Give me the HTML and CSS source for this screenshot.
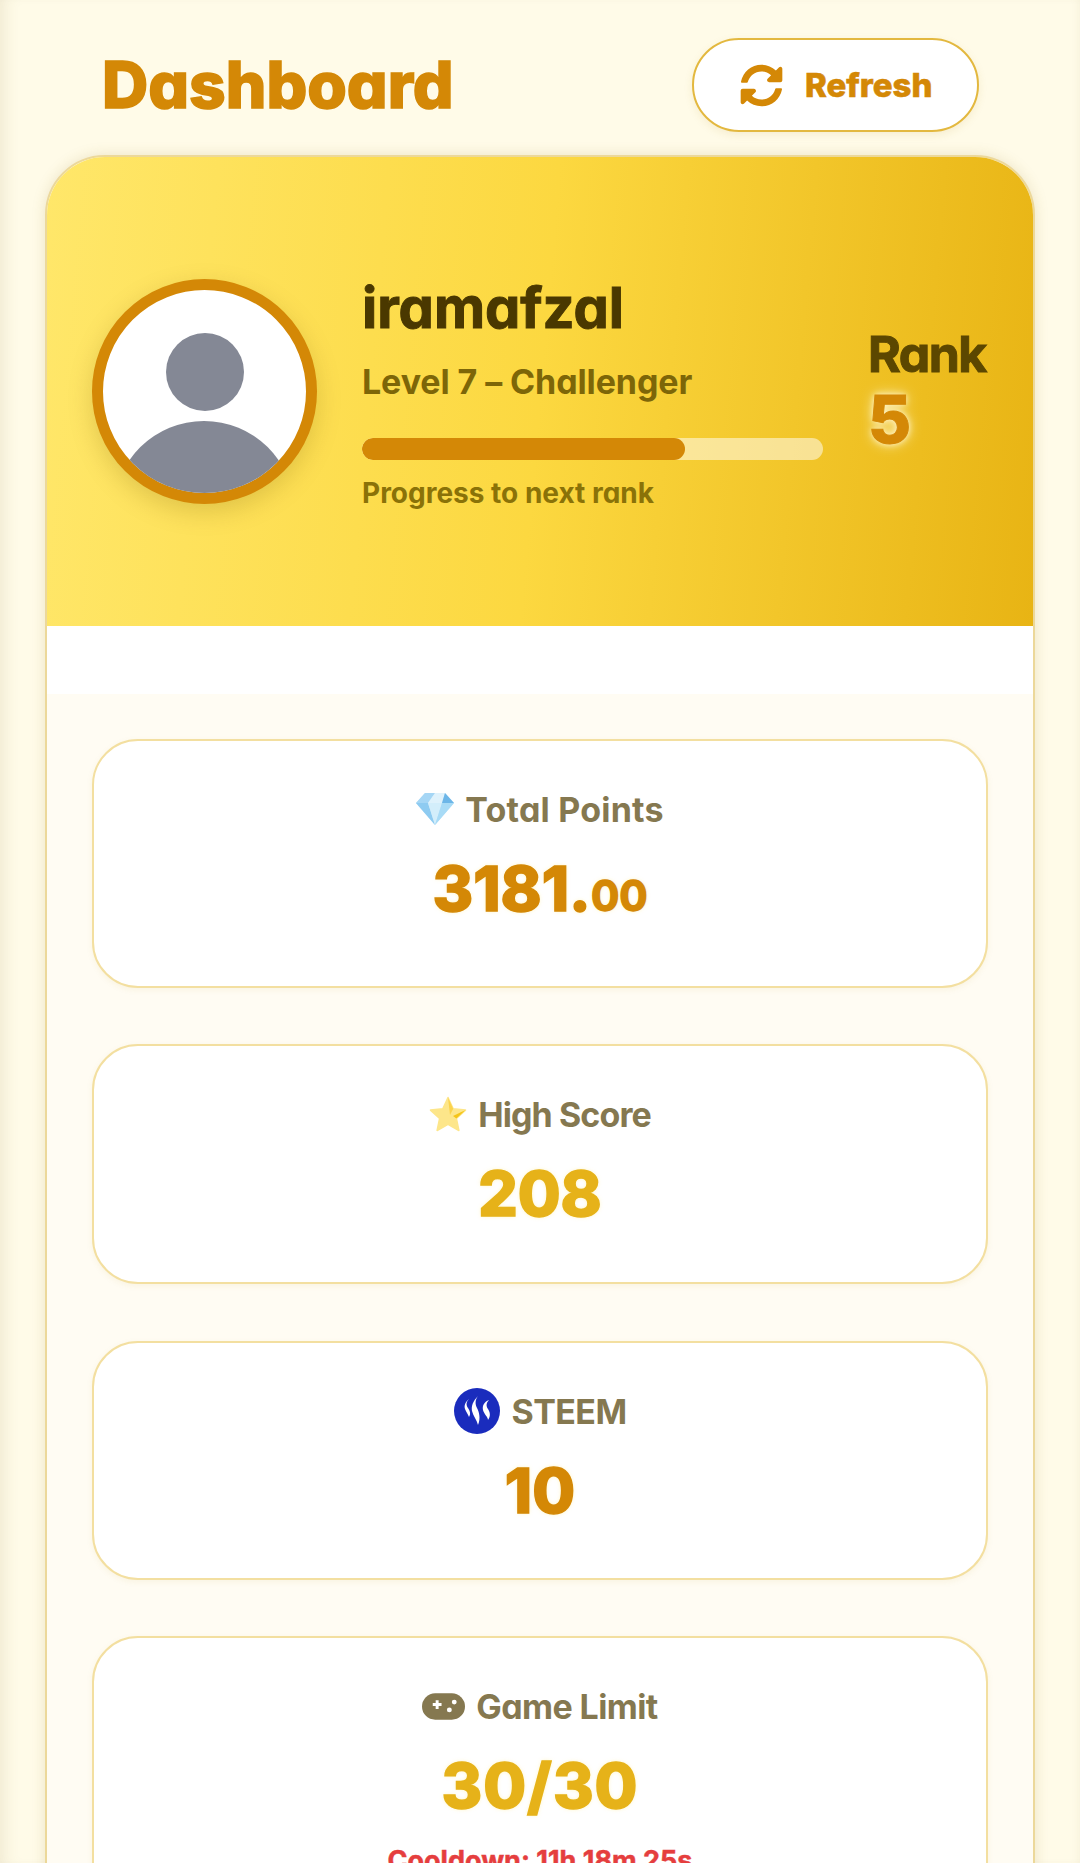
FILE: index.html
```html
<!DOCTYPE html>
<html>
<head>
  <meta charset="UTF-8">
  <title>Dashboard</title>
  <link rel="stylesheet" href="styles.css">
</head>
<body>
<div class="topbar">
  <h1 class="title">Dashboard</h1>
  <button class="refresh" type="button">
    <svg class="refresh-icon" viewBox="0 0 512 512"><path d="M370.72 133.28C339.458 104.008 298.888 87.962 255.848 88c-77.458.068-144.328 53.178-162.791 126.85-1.344 5.363-6.122 9.15-11.651 9.15H24.103c-7.498 0-13.194-6.807-11.807-14.176C33.933 94.924 134.813 8 256 8c66.448 0 126.791 26.136 171.315 68.685L463.03 40.97C478.149 25.851 504 36.559 504 57.941V192c0 13.255-10.745 24-24 24H345.941c-21.382 0-32.09-25.851-16.971-40.971l41.75-41.749zM32 296h134.059c21.382 0 32.09 25.851 16.971 40.971l-41.75 41.75c31.262 29.273 71.835 45.319 114.876 45.28 77.418-.07 144.315-53.144 162.787-126.849 1.344-5.363 6.122-9.15 11.651-9.15h57.304c7.498 0 13.194 6.807 11.807 14.176C478.067 417.076 377.187 504 256 504c-66.448 0-126.791-26.136-171.315-68.685L48.97 471.03C33.851 486.149 8 475.441 8 454.059V320c0-13.255 10.745-24 24-24z"/></svg>
    <span>Refresh</span>
  </button>
</div>

<div class="card">
  <div class="hero">
    <div class="avatar">
      <svg viewBox="0 0 203 203">
        <circle cx="102" cy="82" r="39" fill="#848895"/>
        <ellipse cx="101" cy="220" rx="90" ry="89" fill="#848895"/>
      </svg>
    </div>
    <div class="profile">
      <div class="name">iramafzal</div>
      <div class="level">Level 7 – Challenger</div>
      <div class="track"><div class="fill" style="width: 70%"></div></div>
      <div class="progress-label">Progress to next rank</div>
    </div>
    <div class="rank">
      <div class="rank-label">Rank</div>
      <div class="rank-value">5</div>
    </div>
  </div>
  <div class="spacer"></div>

  <div class="stats">
    <div class="stat stat-points">
      <div class="stat-label">
        <svg class="emoji emoji-gem" viewBox="0 0 38 32">
          <polygon points="9,0 29,0 38,10 19,32 0,10" fill="#bfe3f8"/>
          <polygon points="9,0 19,0 12,10 0,10" fill="#a5d6f5"/>
          <polygon points="19,0 29,0 26,10 12,10" fill="#dff2fc"/>
          <polygon points="29,0 38,10 26,10" fill="#6cb6e8"/>
          <polygon points="0,10 12,10 19,32" fill="#8ecbf1"/>
          <polygon points="12,10 26,10 19,32" fill="#d3eefb"/>
          <polygon points="26,10 38,10 19,32" fill="#a8dbf6"/>
        </svg>
        <span>Total Points</span>
      </div>
      <div class="stat-value value-dark">3181.<small>00</small></div>
    </div>

    <div class="stat stat-score">
      <div class="stat-label">
        <svg class="emoji emoji-star" viewBox="0 0 38 36">
          <path d="M19 1.5l5.2 11.200 12.300 1.400-9.100 8.300 2.500 12.100L19 28.400 8.100 34.500l2.500-12.100-9.100-8.300 12.300-1.400z" fill="#fde68a" stroke="#fde68a" stroke-width="1.500" stroke-linejoin="round"/>
          <path d="M19 1.500l5.200 11.200L21 19z" fill="#fbd34d"/>
          <path d="M36.500 14.100l-9.100 8.300L24 20z" fill="#f5c518"/>
        </svg>
        <span class="score-text">High Score</span>
      </div>
      <div class="stat-value value-gold">208</div>
    </div>

    <div class="stat stat-steem">
      <div class="stat-label">
        <svg class="emoji emoji-steem" viewBox="0 0 46 46">
          <circle cx="23" cy="23" r="23" fill="#1a2cbd"/>
          <path d="M15 11c-3 3-3 6-1 9s3 6 1 9c-1-3-3-5-4-8s0-7 4-10z" fill="#fff"/>
          <path d="M24 8c-3 4-3 8-1 12s4 10 1 17c-1-5-5-9-6-14s1-10 6-15z" fill="#fff"/>
          <path d="M35 12c-3 3-3 6-1 9s3 7 0 11c0-3-4-6-5-10s1-8 6-10z" fill="#fff"/>
        </svg>
        <span>STEEM</span>
      </div>
      <div class="stat-value value-dark">10</div>
    </div>

    <div class="stat stat-limit">
      <div class="stat-label">
        <svg class="emoji emoji-pad" viewBox="0 0 44 27">
          <rect width="44" height="27" rx="13.500" fill="#857850"/>
          <path d="M11 10h3V7h3v3h3v3h-3v3h-3v-3h-3z" fill="#fff"/>
          <circle cx="33" cy="9" r="2.500" fill="#fff"/>
          <circle cx="28" cy="17" r="2.500" fill="#fff"/>
        </svg>
        <span>Game Limit</span>
      </div>
      <div class="stat-value value-gold">30/30</div>
      <div class="cooldown">Cooldown: 11h 18m 25s</div>
    </div>
  </div>
</div>
</body>
</html>
```

FILE: styles.css
```css
html { height: 100%; overflow: hidden; }
body {
  margin: 0;
  height: 1863px;
  overflow: hidden;
  background: #fffbe8;
  box-shadow: inset 14px 0 16px -10px rgba(120, 100, 40, .12), inset -6px 0 10px -6px rgba(120, 100, 40, .08);
  font-family: Inter, "Noto Sans", sans-serif;
  font-feature-settings: "cv11" 1;
  font-weight: 700;
}

.topbar {
  display: flex;
  justify-content: space-between;
  align-items: center;
  height: 94px;
  padding: 38px 101px 23px 102px;
}
.title {
  margin: -2px 0 0;
  color: #d48806;
  font-size: 64px;
  font-weight: 800;
  -webkit-text-stroke: 1.5px #d48806;
}
.refresh {
  display: flex;
  align-items: center;
  gap: 22px;
  box-sizing: border-box;
  width: 287px;
  height: 94px;
  padding: 0 0 0 46px;
  background: #fff;
  border: 2px solid #e3b83f;
  border-radius: 47px;
  box-shadow: 0 3px 8px rgba(180, 140, 30, .12);
  color: #d48806;
  font: inherit;
  font-size: 33px;
  font-weight: 800;
  -webkit-text-stroke: .6px #d48806;
}
.refresh-icon { width: 43px; height: 43px; fill: #d48806; }

.card {
  margin: 0 45px;
  height: 1800px;
  background: #fffcf3;
  border: 2px solid #ecd89a;
  border-radius: 60px 60px 0 0;
  box-shadow: 0 0 14px rgba(150, 120, 40, .18);
  overflow: hidden;
}

.hero {
  display: flex;
  align-items: flex-start;
  box-sizing: border-box;
  height: 469px;
  padding: 122px 46px 0 45px;
  background: linear-gradient(95deg, #ffe76a 0%, #fcd840 50%, #e8b414 100%);
}
.avatar {
  flex: none;
  width: 225px;
  height: 225px;
  box-sizing: border-box;
  border: 11px solid #d48806;
  border-radius: 50%;
  background: #fff;
  box-shadow: 0 8px 24px rgba(120, 90, 10, .22);
  overflow: hidden;
}
.avatar svg { display: block; width: 100%; height: 100%; }

.profile { width: 461px; margin: 0 45px; flex: none; }
.name {
  margin-top: -4px;
  color: #4a3800;
  font-size: 56px;
  line-height: 66px;
  -webkit-text-stroke: 1px #4a3800;
}
.level {
  margin-top: 20px;
  color: #7d6608;
  font-size: 34px;
  line-height: 42px;
  letter-spacing: -.1px;
}
.track {
  height: 22px;
  margin-top: 35px;
  border-radius: 11px;
  background: rgba(255, 255, 255, .5);
  overflow: hidden;
}
.fill { height: 100%; border-radius: 11px; background: #d48806; }
.progress-label {
  margin-top: 16px;
  color: #8a7208;
  font-size: 28px;
  line-height: 34px;
}

.rank { flex: none; margin-top: 45px; }
.rank-label {
  color: #5c4700;
  font-size: 50px;
  line-height: 60px;
  letter-spacing: -1.5px;
  -webkit-text-stroke: 1px #5c4700;
}
.rank-value {
  color: #d48806;
  font-size: 66px;
  line-height: 70px;
  font-weight: 800;
  text-shadow: 0 0 6px #fff6d0, 0 0 14px rgba(255, 245, 200, .9);
  -webkit-text-stroke: 1px #d48806;
}

.spacer { height: 68px; background: #fff; }

.stats {
  display: flex;
  flex-direction: column;
  gap: 56px;
  padding: 45px 45px 0;
}
.stat {
  box-sizing: border-box;
  background: #fff;
  border: 2px solid #f3dfa0;
  border-radius: 46px;
  box-shadow: 0 2px 6px rgba(180, 140, 30, .08);
  text-align: center;
}
.stat-points { height: 249px; padding-top: 45px; }
.stat-score { height: 240px; padding-top: 45px; }
.stat-steem { height: 239px; margin-top: 1px; padding-top: 45px; }
.stat-limit { height: 300px; padding-top: 45px; }

.stat-label {
  display: flex;
  justify-content: center;
  align-items: center;
  gap: 11px;
  height: 46px;
  color: #857850;
  font-size: 34px;
  letter-spacing: -.6px;
}
.stat-points .stat-label { letter-spacing: .2px; }
.score-text { letter-spacing: -.9px; }
.emoji { flex: none; }
.emoji-gem { width: 38px; height: 32px; }
.emoji-star { width: 38px; height: 36px; }
.emoji-steem { width: 46px; height: 46px; margin-right: 1px; }
.emoji-pad { width: 43px; height: 27px; }

.stat-value {
  margin-top: 17px;
  font-size: 62px;
  line-height: 80px;
  font-weight: 800;
  text-shadow: 0 0 4px rgba(255, 236, 150, .7);
}
.stat-value small { font-size: 42px; font-weight: 700; }
.value-dark { color: #d48806; -webkit-text-stroke: 1.5px #d48806; }
.value-gold { color: #e6b219; -webkit-text-stroke: 1.5px #e6b219; }
.stat-limit .stat-value { letter-spacing: 1px; }
.cooldown {
  margin-top: 18px;
  color: #e53e3e;
  font-size: 27px;
  -webkit-text-stroke: .5px #e53e3e;
}
```
